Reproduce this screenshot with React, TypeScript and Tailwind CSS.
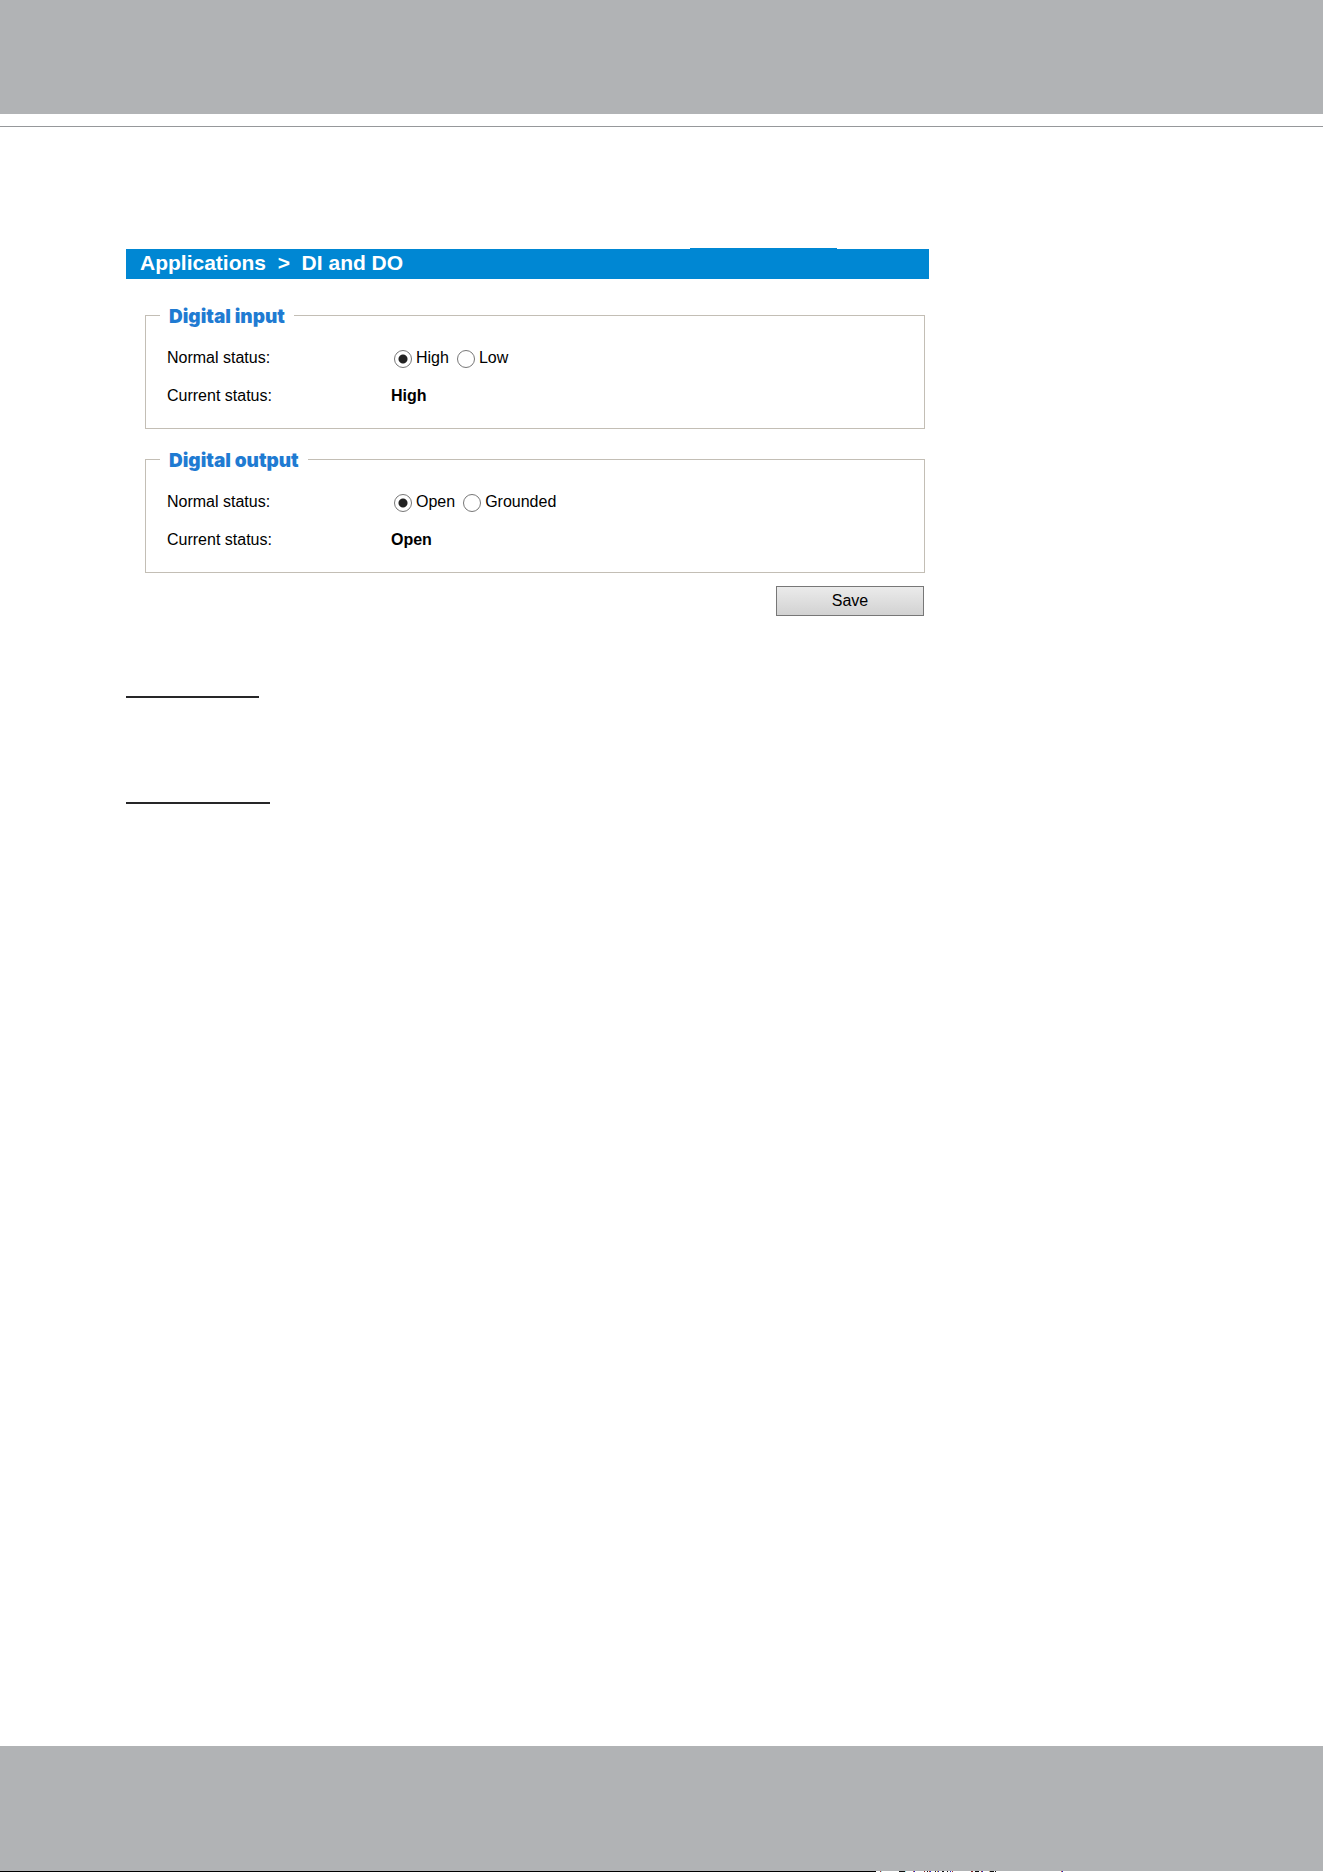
import React, { useState } from 'react';

interface StatusPanelProps {
  title: string;
  name: string;
  options: string[];
  current: string;
}

const StatusPanel: React.FC<StatusPanelProps> = ({ title, name, options, current }) => {
  const [selected, setSelected] = useState(options[0]);

  return (
    <fieldset className="min-w-0 border border-[#c3beb5] pl-[14px] pr-4 pb-[13px]">
      <legend className="px-[9px] pt-1 font-['Inter',sans-serif] text-[19px] leading-6 font-black text-[#1f7bd2]">
        {title}
      </legend>
      <div className="pl-[7px] pt-[10px]">
        <div role="radiogroup" aria-labelledby={`${name}-label`} className="flex min-h-[38px] items-center">
          <span id={`${name}-label`} className="w-[224px] shrink-0">Normal status:</span>
          <div className="flex flex-wrap gap-x-2 pl-[3px]">
            {options.map((option) => (
              <label key={option} className="flex items-center gap-1">
                <input
                  type="radio"
                  name={name}
                  value={option}
                  checked={selected === option}
                  onChange={() => setSelected(option)}
                  className="mt-[2px] size-[18px] appearance-none rounded-full border border-[#777] bg-white checked:bg-[radial-gradient(circle,#222_4px,transparent_5px)]"
                />
                {option}
              </label>
            ))}
          </div>
        </div>
        <div className="flex min-h-[38px] items-center">
          <span className="w-[224px] shrink-0">Current status:</span>
          <strong className="font-bold">{current}</strong>
        </div>
      </div>
    </fieldset>
  );
};

// [x, width, color] of the marks in the bottom strip
const marks: [number, number, string][] = [
  [4, 1, '#a33'], [5, 1, '#9ee'], [23, 6, '#111'], [29, 1, '#9ee'], [37, 1, '#b55'], [38, 1, '#22c'],
  [48, 1, '#822'], [51, 1, '#111'], [53, 1, '#a33'], [54, 1, '#22c'], [59, 1, '#111'], [61, 1, '#c93'],
  [62, 1, '#22c'], [66, 2, '#111'], [71, 1, '#111'], [74, 1, '#22c'], [76, 1, '#a33'], [95, 2, '#822'],
  [99, 4, '#111'], [105, 1, '#a33'], [106, 1, '#22c'], [113, 1, '#ca8'], [114, 4, '#111'], [119, 1, '#111'],
  [185, 1, '#c55'], [186, 1, '#22c'],
];

export default function App() {
  return (
    <div className="flex min-h-screen flex-col bg-white font-['Liberation_Sans',Arial,sans-serif] text-base leading-6 text-black">
      <header className="mr-px border-b border-[#96989b] pb-3">
        <div className="h-[114px] bg-[#b1b3b5]" />
      </header>

      <main className="w-full max-w-[929px] pl-[126px] pt-[121px]">
        <div className="ml-[564px] h-px w-[147px] bg-[#0087d3]" />
        <h1 className="bg-[#0087d3] px-[14px] pb-[2px] text-[21px] leading-7 font-bold whitespace-pre text-white">
          {'Applications  >  DI and DO'}
        </h1>
        <form className="mt-[22px] flex flex-col gap-4 pl-[19px] pr-1" onSubmit={(e) => e.preventDefault()}>
          <StatusPanel title="Digital input" name="digital-input" options={['High', 'Low']} current="High" />
          <StatusPanel title="Digital output" name="digital-output" options={['Open', 'Grounded']} current="Open" />
          <button
            type="submit"
            className="-mt-[3px] mr-px h-[30px] w-[148px] self-end border border-[#777] bg-linear-to-b from-[#ebebeb] to-[#d2d2d2]"
          >
            Save
          </button>
        </form>
        <div className="mt-20 h-[2px] w-[133px] bg-[#262628]" />
        <div className="mt-[104px] h-[2px] w-36 bg-[#262628]" />
      </main>

      <footer className="mt-auto">
        <div className="mr-px h-[125px] bg-[#b1b3b5]" />
        <div className="flex h-px">
          <div className="w-[876px] bg-black" />
          <svg className="h-px w-[200px]" viewBox="0 0 200 1" aria-hidden="true">
            {marks.map(([x, width, fill]) => (
              <rect key={x} x={x} y={0} width={width} height={1} fill={fill} />
            ))}
          </svg>
        </div>
      </footer>
    </div>
  );
}
